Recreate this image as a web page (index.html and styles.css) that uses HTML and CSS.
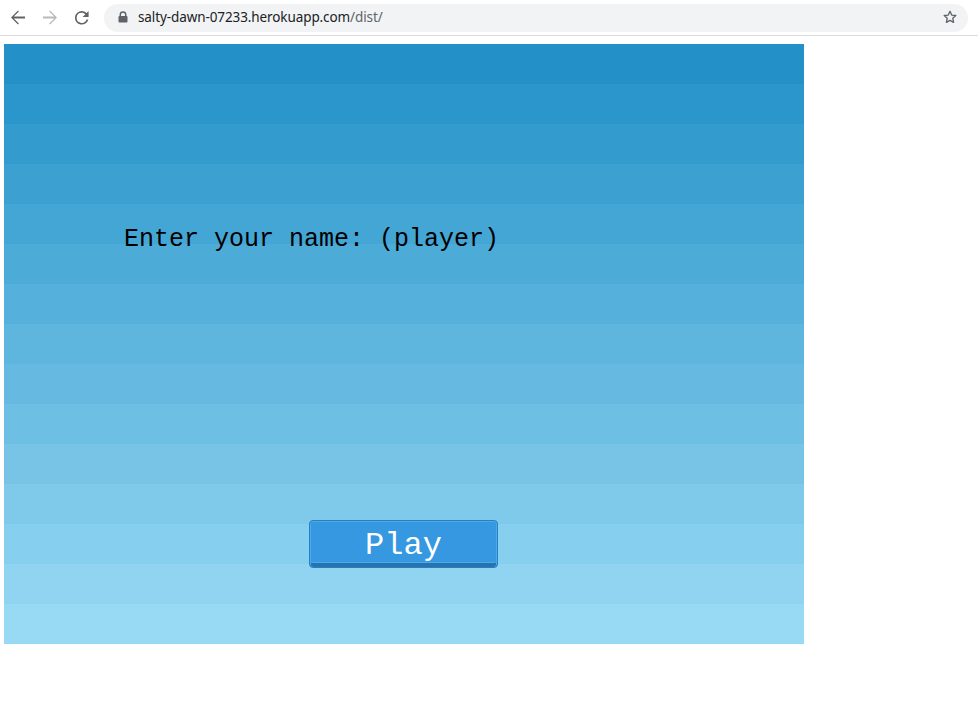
FILE: index.html
```html
<!DOCTYPE html>
<html>
<head>
<meta charset="utf-8">
<link rel="stylesheet" href="styles.css">
</head>
<body>
<div class="toolbar">
  <div class="navs">
    <span class="nav">
      <svg width="16" height="16" viewBox="0 0 16 16"><path d="M15 7H3.8l5.1-5.1L8 1 1 8l7 7 .9-.9L3.8 9H15z" fill="#5f6368" transform="translate(0 -0.5) scale(1 1)"/></svg>
    </span>
    <span class="nav">
      <svg width="16" height="16" viewBox="0 0 16 16"><path d="M1 7h11.2L7.1 1.9 8 1l7 7-7 7-.9-.9L12.2 9H1z" fill="#b7babd" transform="translate(0 -0.5)"/></svg>
    </span>
    <span class="nav">
      <svg width="16" height="16" viewBox="0 0 16 16"><path d="M13.6 2.4A7.9 7.9 0 0 0 8 0a8 8 0 1 0 7.7 10h-2.1A6 6 0 1 1 8 2c1.7 0 3.1.7 4.2 1.8L9 7h7V0z" fill="#5f6368" transform="translate(1 1) scale(0.85)"/></svg>
    </span>
  </div>
  <div class="omnibox">
    <svg class="lock" width="10" height="12" viewBox="0 0 10 12"><path d="M2.3 5V3.6a2.7 2.7 0 0 1 5.4 0V5" fill="none" stroke="#5f6368" stroke-width="1.5"/><rect x="0.5" y="5" width="9" height="6.5" rx="1" fill="#5f6368"/></svg>
    <span class="url">salty-dawn-07233.herokuapp.com<span class="path">/dist/</span></span>
    <svg class="star" width="16" height="16" viewBox="0 0 24 24"><path d="M12 3.5l2.6 5.6 6.1.7-4.5 4.2 1.2 6-5.4-3-5.4 3 1.2-6-4.5-4.2 6.1-.7z" fill="none" stroke="#5f6368" stroke-width="2" stroke-linejoin="round"/></svg>
  </div>
</div>
<div class="page">
  <div class="canvas">
    <div class="stripe s0"></div>
    <div class="stripe s1"></div>
    <div class="stripe s2"></div>
    <div class="stripe s3"></div>
    <div class="stripe s4"></div>
    <div class="stripe s5"></div>
    <div class="stripe s6"></div>
    <div class="stripe s7"></div>
    <div class="stripe s8"></div>
    <div class="stripe s9"></div>
    <div class="stripe s10"></div>
    <div class="stripe s11"></div>
    <div class="stripe s12"></div>
    <div class="stripe s13"></div>
    <div class="stripe s14"></div>
    <div class="prompt">Enter your name: (player)</div>
    <div class="play">Play</div>
  </div>
</div>
</body>
</html>
```

FILE: styles.css
```css
html, body {
  margin: 0;
  padding: 0;
  background: #ffffff;
}

body {
  font-family: "Liberation Sans", Arial, sans-serif;
}

.toolbar {
  height: 35px;
  border-bottom: 1px solid #dadce0;
  display: flex;
  align-items: center;
  background: #ffffff;
}

.navs {
  display: flex;
  align-items: center;
  padding-left: 10px;
  gap: 16px;
}

.nav {
  width: 16px;
  height: 16px;
  display: flex;
}

.omnibox {
  margin-left: 14px;
  width: 864px;
  height: 28px;
  border-radius: 14px;
  background: #f1f3f4;
  display: flex;
  align-items: center;
  box-sizing: border-box;
  padding-left: 14px;
  padding-right: 10px;
}

.lock {
  display: block;
  margin-top: -2px;
}

.url {
  margin-left: 10px;
  font-family: "Noto Sans", "DejaVu Sans", sans-serif;
  font-size: 13.5px;
  color: #202124;
  letter-spacing: -0.1px;
  flex: 1;
  margin-top: -2px;
}

.url .path {
  color: #5f6368;
}

.star {
  display: block;
  margin-top: -2px;
}

.page {
  padding: 8px 0 0 4px;
}

.canvas {
  position: relative;
  width: 800px;
  height: 600px;
  display: flex;
  flex-direction: column;
}

.stripe { height: 40px; }
.s0 { background: #2391c8; }
.s1 { background: #2b96cb; }
.s2 { background: #349bce; }
.s3 { background: #3ca0d1; }
.s4 { background: #44a6d5; }
.s5 { background: #4dabd8; }
.s6 { background: #55b0db; }
.s7 { background: #5eb5de; }
.s8 { background: #66bae1; }
.s9 { background: #6ebfe4; }
.s10 { background: #77c4e7; }
.s11 { background: #7fcaeb; }
.s12 { background: #87cfee; }
.s13 { background: #90d4f1; }
.s14 { background: #98d9f4; }

.prompt {
  position: absolute;
  left: 120px;
  top: 182px;
  font-family: "Liberation Mono", "Courier New", monospace;
  font-size: 25px;
  line-height: 28px;
  color: #000000;
}

.play {
  position: absolute;
  left: 305px;
  top: 476px;
  width: 189px;
  height: 48px;
  box-sizing: border-box;
  border: 1px solid #2a7fc0;
  border-radius: 4px;
  background: #3598e1;
  box-shadow: inset 0 1px 0 #4aa9ef, inset 1px 0 0 #4aa9ef, inset -1px 0 0 #4aa9ef, inset 0 -4px 0 #2673ad, inset 0 -5px 0 #4aa9ef;
  font-family: "Liberation Mono", "Courier New", monospace;
  font-size: 32px;
  color: #ffffff;
  display: flex;
  justify-content: center;
  align-items: center;
  padding-top: 2px;
}
```
